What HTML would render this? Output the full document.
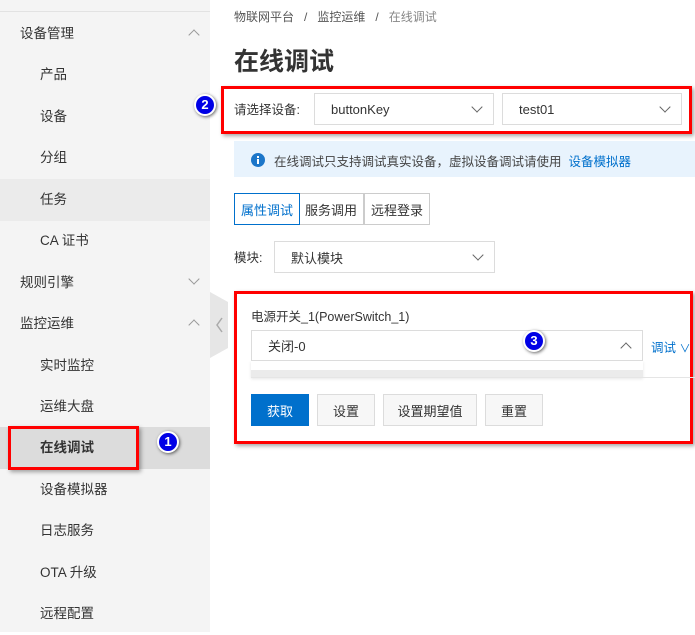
<!DOCTYPE html>
<html><head><meta charset="utf-8"><style>
*{margin:0;padding:0;box-sizing:border-box}
body{width:695px;height:632px;overflow:hidden;background:#fff;font-family:"Liberation Sans","Noto Sans CJK SC",sans-serif;font-size:13px;color:#333;position:relative}
.a{position:absolute}
.side{left:0;top:0;width:210px;height:632px;background:#f4f4f4}
.it{position:absolute;left:0;width:210px;height:42px;line-height:42px;font-size:13.5px;color:#333}
.chev{position:absolute;right:12px;top:16px;width:8px;height:8px;border-left:1.5px solid #999;border-top:1.5px solid #999}
.up{transform:rotate(45deg);top:18px}
.dn{transform:rotate(225deg);top:13px}
.sel{position:absolute;border:1px solid #dcdcdc;background:#fff;height:32px;display:flex;align-items:center;padding-left:16px;font-size:13px}
.sel .c{position:absolute;right:12px;top:9px;width:8px;height:8px;border-right:1.3px solid #666;border-bottom:1.3px solid #666;transform:rotate(45deg)}
.red{position:absolute;border:3px solid #f00;box-shadow:2px 2px 4px rgba(0,0,0,.35)}
.badge{position:absolute;width:22px;height:22px;border-radius:50%;background:#0000e6;border:2px solid #fff;box-shadow:1px 1px 3px rgba(0,0,0,.6);color:#fff;font-size:13px;font-weight:bold;text-align:center;line-height:18px}
.btn{position:absolute;top:394px;height:32px;display:flex;align-items:center;justify-content:center;border:1px solid #dcdcdc;background:#f7f7f7;font-size:13px}
.tab{position:absolute;top:193px;height:32px;display:flex;align-items:center;justify-content:center;width:66px;border:1px solid #ccc;font-size:13px;background:#fff}
</style></head><body>
<div class="a side">
<div class="a" style="left:0;top:11px;width:210px;border-top:1px solid #e2e2e2"></div>
<div class="it" style="top:13px;padding-left:20px">设备管理<span class="chev up"></span></div>
<div class="it" style="top:54px;padding-left:40px">产品</div>
<div class="it" style="top:96px;padding-left:40px">设备</div>
<div class="it" style="top:137px;padding-left:40px">分组</div>
<div class="it" style="top:179px;padding-left:40px;background:#ebebeb">任务</div>
<div class="it" style="top:220px;padding-left:40px">CA 证书</div>
<div class="it" style="top:262px;padding-left:20px">规则引擎<span class="chev dn"></span></div>
<div class="it" style="top:303px;padding-left:20px">监控运维<span class="chev up"></span></div>
<div class="it" style="top:345px;padding-left:40px">实时监控</div>
<div class="it" style="top:386px;padding-left:40px">运维大盘</div>
<div class="it" style="top:427px;padding-left:40px;background:#dcdcdc;font-weight:bold">在线调试</div>
<div class="it" style="top:469px;padding-left:40px">设备模拟器</div>
<div class="it" style="top:510px;padding-left:40px">日志服务</div>
<div class="it" style="top:552px;padding-left:40px">OTA 升级</div>
<div class="it" style="top:593px;padding-left:40px">远程配置</div>
</div>
<svg class="a" style="left:210px;top:292px" width="20" height="66"><path d="M0 0 L18 10 L18 56 L0 66Z" fill="#e6e6e6"/><path d="M12 26 L7 33 L12 40" stroke="#aaa" stroke-width="1.5" fill="none"/></svg>
<div class="red" style="left:8px;top:426px;width:131px;height:44px"></div>
<div class="badge" style="left:157px;top:431px">1</div>
<div class="a" style="left:234px;top:8px;font-size:12px;color:#555">物联网平台 &nbsp;&nbsp;/&nbsp;&nbsp; 监控运维 &nbsp;&nbsp;/&nbsp;&nbsp; <span style="color:#888">在线调试</span></div>
<div class="a" style="left:234px;top:42px;font-size:25px;font-weight:bold;color:#333">在线调试</div>
<div class="red" style="left:221px;top:86px;width:471px;height:48px"></div>
<div class="badge" style="left:194px;top:94px">2</div>
<div class="a" style="left:234px;top:99px;font-size:12.5px">请选择设备:</div>
<div class="sel" style="left:314px;top:93px;width:180px">buttonKey<span class="c"></span></div>
<div class="sel" style="left:502px;top:93px;width:180px">test01<span class="c"></span></div>
<div class="a" style="left:234px;top:141px;width:461px;height:36px;background:#e8f3fd"></div>
<svg class="a" style="left:251px;top:153px" width="14" height="14"><circle cx="7" cy="7" r="7" fill="#1c76c9"/><rect x="6" y="6" width="2" height="5" fill="#fff"/><rect x="6" y="3" width="2" height="2" fill="#fff"/></svg>
<div class="a" style="left:274px;top:151px;font-size:12.5px;color:#444">在线调试只支持调试真实设备，虚拟设备调试请使用 &nbsp;<span style="color:#0070cc">设备模拟器</span></div>
<div class="tab" style="left:298px">服务调用</div>
<div class="tab" style="left:364px;width:66px">远程登录</div>
<div class="tab" style="left:234px;border-color:#0070cc;color:#0070cc">属性调试</div>
<div class="a" style="left:234px;top:247px;font-size:12.5px">模块:</div>
<div class="sel" style="left:274px;top:241px;width:221px;padding-left:16px">默认模块<span class="c"></span></div>
<div class="red" style="left:234px;top:291px;width:459px;height:153px"></div>
<div class="a" style="left:251px;top:306px;font-size:12.5px">电源开关_1(PowerSwitch_1)</div>
<div class="a" style="left:251px;top:360px;width:392px;height:17px;background:#fff;border-bottom:7px solid #ebebeb;box-shadow:0 2px 3px rgba(0,0,0,.1)"></div>
<div class="a" style="left:251px;top:377px;width:444px;border-top:1px solid #e5e5e5"></div>
<div class="sel" style="left:251px;top:330px;width:392px;height:31px;padding-left:16px">关闭-0<span class="c" style="transform:rotate(225deg);top:13px"></span></div>
<div class="badge" style="left:523px;top:330px">3</div>
<div class="a" style="left:651px;top:337px;color:#0070cc;font-size:12.5px">调试 <span style="font-size:11px">∨</span></div>
<div class="btn" style="left:251px;width:58px;background:#0070cc;border-color:#0070cc;color:#fff">获取</div>
<div class="btn" style="left:317px;width:58px">设置</div>
<div class="btn" style="left:383px;width:94px">设置期望值</div>
<div class="btn" style="left:485px;width:58px">重置</div>
</body></html>
